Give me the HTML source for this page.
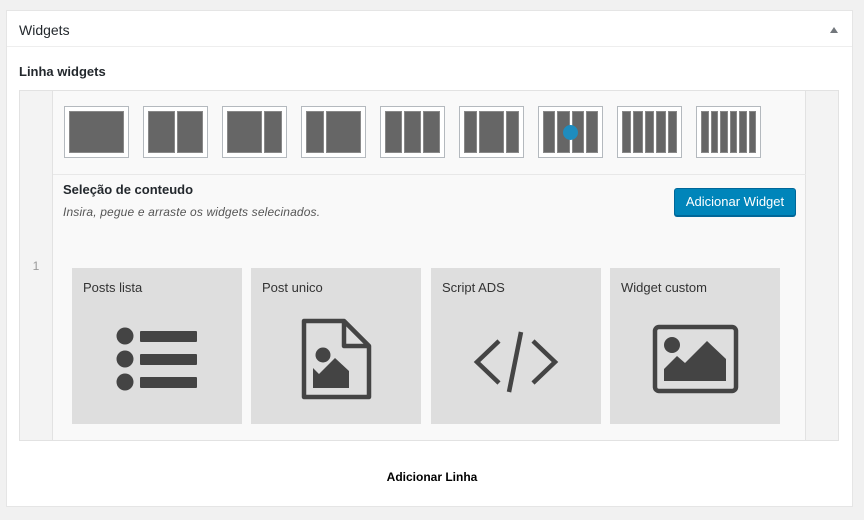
<!DOCTYPE html>
<html><head><style>
*{box-sizing:border-box;margin:0;padding:0}
body{width:864px;height:520px;background:#f1f1f1;font-family:"Liberation Sans",sans-serif;position:relative;overflow:hidden;color:#23282d}
.panel{position:absolute;left:6px;top:10px;width:847px;height:497px;background:#fff;border:1px solid #e5e5e5}
.hd{height:36px;border-bottom:1px solid #eee;font-size:14px;padding:11px 0 0 12px}
.arrow{position:absolute;right:14px;top:16px;width:0;height:0;border-left:4px solid transparent;border-right:4px solid transparent;border-bottom:6px solid #72777c}
.lw{position:absolute;left:12px;top:53px;font-size:13px;font-weight:bold}
.row{position:absolute;left:19px;top:90px;width:820px;height:351px;background:#f9f9f9;border:1px solid #e2e2e2}
.lg{position:absolute;left:0;top:0;width:33px;height:349px;background:#f3f3f3;border-right:1px solid #e2e2e2;color:#999;font-size:12px;text-align:center;padding-top:168px}
.rg{position:absolute;right:0;top:0;width:33px;height:349px;background:#f3f3f3;border-left:1px solid #e2e2e2}
.ic{position:absolute;top:106px;width:65px;height:52px;border:1px solid #b4b9be;background:#fff;padding:4px;display:flex;gap:2px}
.ic div{background:#666;height:100%;outline:1px solid #888;outline-offset:-1px}
.sep{position:absolute;left:53px;top:174px;width:753px;border-top:1px solid #e8e8e8}
.t1{position:absolute;left:63px;top:182px;font-size:13px;font-weight:bold}
.t2{position:absolute;left:63px;top:205px;font-size:12px;font-style:italic;color:#555;letter-spacing:0.15px}
.btn{position:absolute;left:674px;top:188px;width:122px;height:28px;background:#0085ba;border:1px solid #006799;border-radius:3px;box-shadow:0 1px 0 #006799;color:#fff;font-size:13px;text-align:center;line-height:26px}
.card{position:absolute;top:268px;width:170px;height:156px;background:#dedede}
.card span{position:absolute;left:11px;top:12px;font-size:13px;color:#333}
.card svg{position:absolute;left:0;top:0}
.add{position:absolute;left:0;width:864px;top:470px;text-align:center;font-size:12px;font-weight:bold;color:#000}
</style></head><body>
<div class="panel"><div class="hd">Widgets</div><div class="arrow"></div><div class="lw">Linha widgets</div></div>
<div class="row"><div class="lg">1</div><div class="rg"></div></div>
<div class="ic" style="left:64px"><div style="flex:1"></div></div>
<div class="ic" style="left:143px"><div style="flex:1"></div><div style="flex:1"></div></div>
<div class="ic" style="left:222px"><div style="flex:2"></div><div style="flex:1"></div></div>
<div class="ic" style="left:301px"><div style="flex:1"></div><div style="flex:2"></div></div>
<div class="ic" style="left:380px"><div style="flex:1"></div><div style="flex:1"></div><div style="flex:1"></div></div>
<div class="ic" style="left:459px"><div style="flex:1"></div><div style="flex:2"></div><div style="flex:1"></div></div>
<div class="ic" style="left:538px;position:absolute"><div style="flex:1"></div><div style="flex:1"></div><div style="flex:1"></div><div style="flex:1"></div><span style="position:absolute;left:24px;top:18px;width:15px;height:15px;border-radius:50%;background:#1e8cbe"></span></div>
<div class="ic" style="left:617px"><div style="flex:1"></div><div style="flex:1"></div><div style="flex:1"></div><div style="flex:1"></div><div style="flex:1"></div></div>
<div class="ic" style="left:696px"><div style="flex:1"></div><div style="flex:1"></div><div style="flex:1"></div><div style="flex:1"></div><div style="flex:1"></div><div style="flex:1"></div></div>
<div class="sep"></div>
<div class="t1">Seleção de conteudo</div>
<div class="t2">Insira, pegue e arraste os widgets selecinados.</div>
<div class="btn">Adicionar Widget</div>
<div class="card" style="left:72px"><span>Posts lista</span><svg width="170" height="156" fill="#444"><circle cx="53" cy="68" r="8.5"/><circle cx="53" cy="91" r="8.5"/><circle cx="53" cy="114" r="8.5"/><rect x="68" y="63" width="57" height="11" rx="1"/><rect x="68" y="86" width="57" height="11" rx="1"/><rect x="68" y="109" width="57" height="11" rx="1"/></svg></div>
<div class="card" style="left:251px"><span>Post unico</span><svg width="170" height="156"><path d="M53 53 H93 L118 78 V129 H53 Z M93 53 V78 H118" fill="none" stroke="#444" stroke-width="4.5" stroke-linejoin="round"/><circle cx="72" cy="87" r="7.5" fill="#444"/><path d="M62 120 V100 L68 106 L84 90 L98 103 V120 Z" fill="#444"/></svg></div>
<div class="card" style="left:431px"><span>Script ADS</span><svg width="170" height="156" fill="none" stroke="#444" stroke-width="4.5"><path d="M68 73 L46 94 L68 115"/><path d="M102 73 L124 94 L102 115"/><path d="M90 64 L78 124"/></svg></div>
<div class="card" style="left:610px"><span>Widget custom</span><svg width="170" height="156"><rect x="45" y="59" width="81" height="64" rx="4" fill="none" stroke="#444" stroke-width="4.5"/><circle cx="62" cy="77" r="8" fill="#444"/><path d="M54 113 V101 L67 88 L75 95 L97 73 L116 91 V113 Z" fill="#444"/></svg></div>
<div class="add">Adicionar Linha</div>
</body></html>
